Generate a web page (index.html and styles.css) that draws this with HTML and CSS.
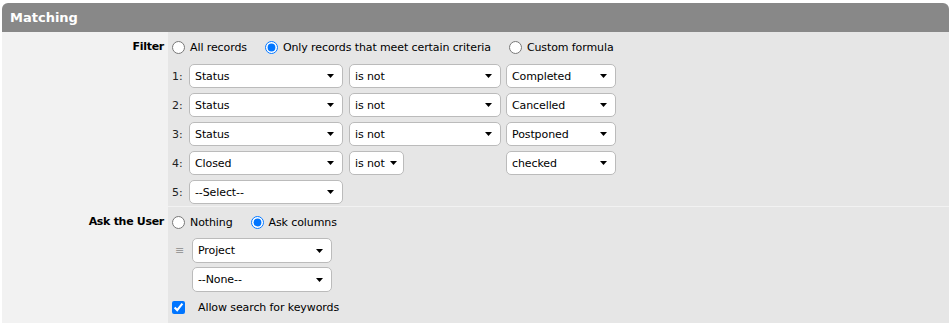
FILE: index.html
```html
<!DOCTYPE html>
<html>
<head>
<meta charset="utf-8">
<link rel="stylesheet" href="styles.css">
</head>
<body>
<div class="panel">
  <div class="head">Matching</div>
  <div class="section filter">
    <div class="lbl">Filter</div>
    <div class="content">
      <div class="radios">
        <label class="opt"><input type="radio" name="f"><span>All records</span></label>
        <label class="opt"><input type="radio" name="f" checked><span>Only records that meet certain criteria</span></label>
        <label class="opt"><input type="radio" name="f"><span>Custom formula</span></label>
      </div>
      <div class="crit">
        <span class="num">1:</span>
        <div class="sel w1"><span>Status</span><svg width="7" height="4" viewBox="0 0 7 4"><path d="M0 0h7L3.5 4z"/></svg></div>
        <div class="sel w2"><span>is not</span><svg width="7" height="4" viewBox="0 0 7 4"><path d="M0 0h7L3.5 4z"/></svg></div>
        <div class="sel w3"><span>Completed</span><svg width="7" height="4" viewBox="0 0 7 4"><path d="M0 0h7L3.5 4z"/></svg></div>

        <span class="num">2:</span>
        <div class="sel w1"><span>Status</span><svg width="7" height="4" viewBox="0 0 7 4"><path d="M0 0h7L3.5 4z"/></svg></div>
        <div class="sel w2"><span>is not</span><svg width="7" height="4" viewBox="0 0 7 4"><path d="M0 0h7L3.5 4z"/></svg></div>
        <div class="sel w3"><span>Cancelled</span><svg width="7" height="4" viewBox="0 0 7 4"><path d="M0 0h7L3.5 4z"/></svg></div>

        <span class="num">3:</span>
        <div class="sel w1"><span>Status</span><svg width="7" height="4" viewBox="0 0 7 4"><path d="M0 0h7L3.5 4z"/></svg></div>
        <div class="sel w2"><span>is not</span><svg width="7" height="4" viewBox="0 0 7 4"><path d="M0 0h7L3.5 4z"/></svg></div>
        <div class="sel w3"><span>Postponed</span><svg width="7" height="4" viewBox="0 0 7 4"><path d="M0 0h7L3.5 4z"/></svg></div>

        <span class="num">4:</span>
        <div class="sel w1"><span>Closed</span><svg width="7" height="4" viewBox="0 0 7 4"><path d="M0 0h7L3.5 4z"/></svg></div>
        <div class="sel wsmall"><span>is not</span><svg width="7" height="4" viewBox="0 0 7 4"><path d="M0 0h7L3.5 4z"/></svg></div>
        <div class="sel w3"><span>checked</span><svg width="7" height="4" viewBox="0 0 7 4"><path d="M0 0h7L3.5 4z"/></svg></div>

        <span class="num">5:</span>
        <div class="sel w1"><span>--Select--</span><svg width="7" height="4" viewBox="0 0 7 4"><path d="M0 0h7L3.5 4z"/></svg></div>
      </div>
    </div>
  </div>
  <div class="section ask">
    <div class="lbl">Ask the User</div>
    <div class="content">
      <div class="radios">
        <label class="opt"><input type="radio" name="a"><span>Nothing</span></label>
        <label class="opt"><input type="radio" name="a" checked><span>Ask columns</span></label>
      </div>
      <div class="cols">
        <span class="handle">&#8801;</span>
        <div class="sel w4"><span>Project</span><svg width="7" height="4" viewBox="0 0 7 4"><path d="M0 0h7L3.5 4z"/></svg></div>
        <span></span>
        <div class="sel w4"><span>--None--</span><svg width="7" height="4" viewBox="0 0 7 4"><path d="M0 0h7L3.5 4z"/></svg></div>
      </div>
      <label class="check"><input type="checkbox" checked><span>Allow search for keywords</span></label>
    </div>
  </div>
</div>
</body>
</html>
```

FILE: styles.css
```css
* { box-sizing: border-box; }
html, body { margin: 0; padding: 0; background: #ffffff; }
body {
  font-family: "DejaVu Sans", Verdana, sans-serif;
  font-size: 11px;
  letter-spacing: -0.1px;
  color: #000;
}
.panel {
  margin: 3px 0 0 2px;
  width: 947px;
}
.head {
  background: #888888;
  color: #fff;
  font-weight: bold;
  font-size: 13px;
  letter-spacing: 0;
  height: 29px;
  line-height: 29px;
  padding-left: 8px;
  border-radius: 6px 6px 0 0;
}
.section {
  display: grid;
  grid-template-columns: 166px 1fr;
  background: linear-gradient(to right, #f2f2f2 166px, #e6e6e6 166px);
}
.filter { border-bottom: 1px solid #f2f2f2; padding-bottom: 2px; }
.lbl {
  font-weight: bold;
  text-align: right;
  padding: 4px 4px 0 0;
  line-height: 22px;
  letter-spacing: -0.3px;
}
.content {
  padding: 4px 0 0 4px;
}
.radios {
  display: flex;
  align-items: center;
  height: 22px;
}
.opt {
  display: flex;
  align-items: center;
  margin-right: 18px;
}
.opt input {
  margin: 0 5px 0 0;
  width: 13px;
  height: 13px;
}
.crit {
  margin-top: 6px;
  display: grid;
  grid-template-columns: 17px 160px 157px 110px;
  row-gap: 5px;
  align-items: center;
}
.num { color: #222; }
.sel {
  height: 24px;
  background: #fff;
  border: 1px solid #bbbbbb;
  border-radius: 5px;
  display: flex;
  align-items: center;
  justify-content: space-between;
  padding: 0 8px 0 5px;
  white-space: nowrap;
}
.sel svg { fill: #000; flex: none; }
.w1 { width: 154px; }
.w2 { width: 152px; }
.w3 { width: 110px; }
.wsmall { width: 55px; padding-right: 6px; }
.w4 { width: 140px; height: 25px; }
.ask .content { padding-bottom: 8px; }
.cols {
  margin-top: 5px;
  display: grid;
  grid-template-columns: 20px 140px;
  row-gap: 4px;
  align-items: center;
}
.handle {
  color: #999;
  font-size: 11px;
  padding-left: 3px;
}
.check {
  display: flex;
  align-items: center;
  height: 16px;
  margin-top: 7px;
}
.check input {
  margin: 0 13px 0 0;
  width: 13px;
  height: 13px;
}
```
